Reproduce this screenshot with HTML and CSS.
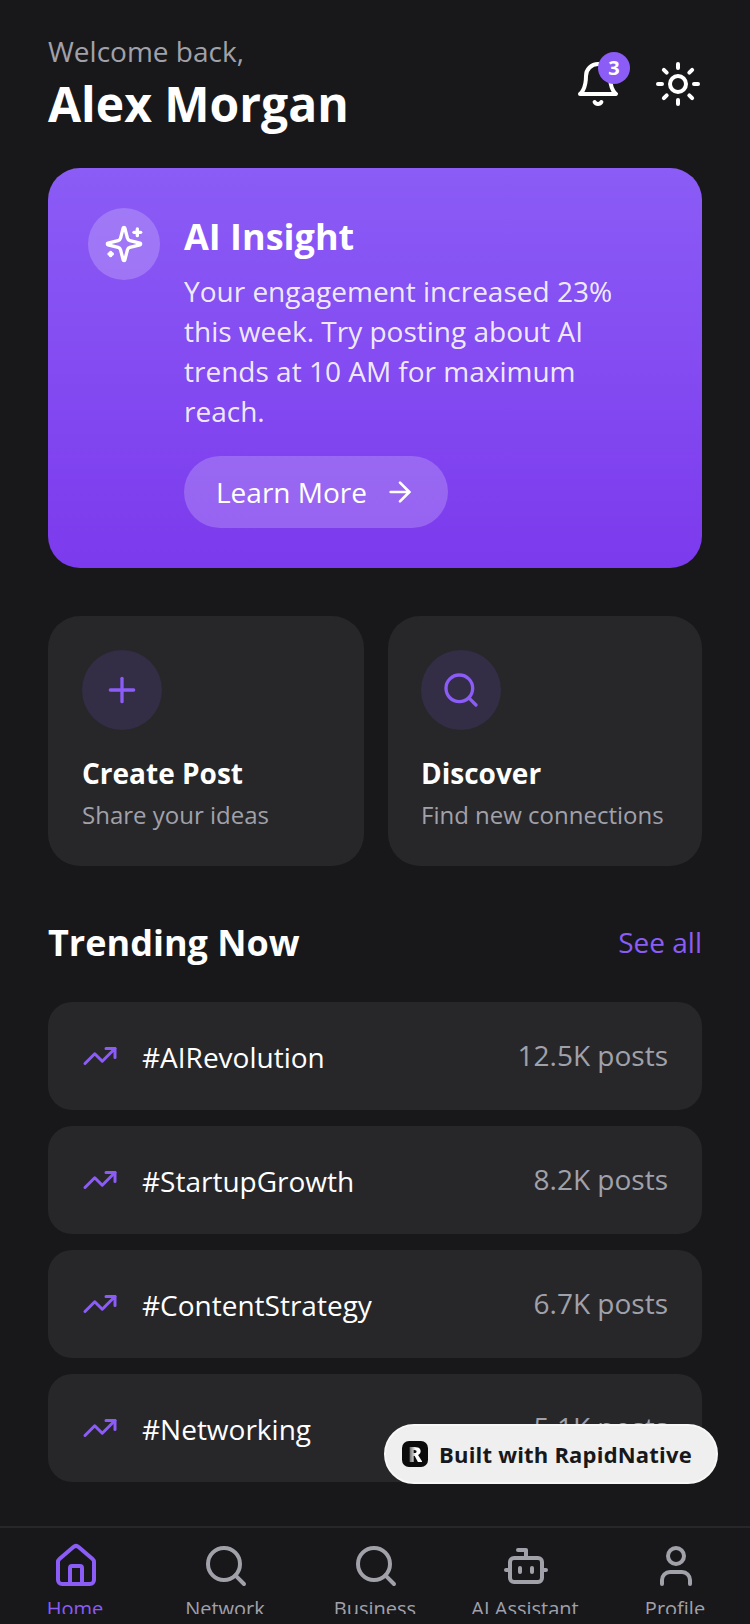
FILE: index.html
```html
<!DOCTYPE html>
<html lang="en">
<head>
    <meta charset="UTF-8">
    <meta name="viewport" content="width=device-width, initial-scale=1.0">
    <title>Home</title>
    <link rel="stylesheet" href="styles.css">
</head>
<body>
    <div class="app">
        <main class="content">
            <header class="top">
                <div>
                    <p class="welcome">Welcome back,</p>
                    <h1 class="name">Alex Morgan</h1>
                </div>
                <div class="top-icons">
                    <div class="bell">
                        <svg class="icon-48" viewBox="0 0 24 24"><path d="M6 8a6 6 0 0 1 12 0c0 7 3 9 3 9H3s3-2 3-9"/><path d="M10.3 21a1.94 1.94 0 0 0 3.4 0"/></svg>
                        <span class="badge">3</span>
                    </div>
                    <svg class="icon-48" viewBox="0 0 24 24"><circle cx="12" cy="12" r="4"/><path d="M12 2v2"/><path d="M12 20v2"/><path d="m4.93 4.93 1.41 1.41"/><path d="m17.66 17.66 1.41 1.41"/><path d="M2 12h2"/><path d="M20 12h2"/><path d="m6.34 17.66-1.41 1.41"/><path d="m19.07 4.93-1.41 1.41"/></svg>
                </div>
            </header>

            <section class="insight">
                <div class="insight-icon">
                    <svg class="icon-40" viewBox="0 0 24 24"><path d="M9.937 15.5A2 2 0 0 0 8.5 14.063l-6.135-1.582a.5.5 0 0 1 0-.962L8.5 9.936A2 2 0 0 0 9.937 8.5l1.582-6.135a.5.5 0 0 1 .963 0L14.063 8.5A2 2 0 0 0 15.5 9.937l6.135 1.581a.5.5 0 0 1 0 .964L15.5 14.063a2 2 0 0 0-1.437 1.437l-1.582 6.135a.5.5 0 0 1-.963 0z"/><path d="M20 3v4"/><path d="M22 5h-4"/><path d="M4 17v2"/><path d="M5 18H3"/></svg>
                </div>
                <div class="insight-body">
                    <h2 class="insight-title">AI Insight</h2>
                    <p class="insight-text">Your engagement increased 23% this week. Try posting about AI trends at 10 AM for maximum reach.</p>
                    <a class="learn">Learn More
                        <svg class="icon-32" viewBox="0 0 24 24"><path d="M5 12h14"/><path d="m12 5 7 7-7 7"/></svg>
                    </a>
                </div>
            </section>

            <section class="quick">
                <div class="quick-card">
                    <div class="quick-icon">
                        <svg class="icon-40" viewBox="0 0 24 24"><path d="M5 12h14"/><path d="M12 5v14"/></svg>
                    </div>
                    <h3 class="quick-title">Create Post</h3>
                    <p class="quick-sub">Share your ideas</p>
                </div>
                <div class="quick-card">
                    <div class="quick-icon">
                        <svg class="icon-40" viewBox="0 0 24 24"><circle cx="11" cy="11" r="8"/><path d="m21 21-4.3-4.3"/></svg>
                    </div>
                    <h3 class="quick-title">Discover</h3>
                    <p class="quick-sub">Find new connections</p>
                </div>
            </section>

            <section class="trending">
                <div class="trending-head">
                    <h2 class="trending-title">Trending Now</h2>
                    <a class="see-all">See all</a>
                </div>
                <div class="trend-row">
                    <svg class="icon-36" viewBox="0 0 24 24"><polyline points="22 7 13.5 15.5 8.5 10.5 2 17"/><polyline points="16 7 22 7 22 13"/></svg>
                    <span class="tag">#AIRevolution</span>
                    <span class="count">12.5K posts</span>
                </div>
                <div class="trend-row">
                    <svg class="icon-36" viewBox="0 0 24 24"><polyline points="22 7 13.5 15.5 8.5 10.5 2 17"/><polyline points="16 7 22 7 22 13"/></svg>
                    <span class="tag">#StartupGrowth</span>
                    <span class="count">8.2K posts</span>
                </div>
                <div class="trend-row">
                    <svg class="icon-36" viewBox="0 0 24 24"><polyline points="22 7 13.5 15.5 8.5 10.5 2 17"/><polyline points="16 7 22 7 22 13"/></svg>
                    <span class="tag">#ContentStrategy</span>
                    <span class="count">6.7K posts</span>
                </div>
                <div class="trend-row">
                    <svg class="icon-36" viewBox="0 0 24 24"><polyline points="22 7 13.5 15.5 8.5 10.5 2 17"/><polyline points="16 7 22 7 22 13"/></svg>
                    <span class="tag">#Networking</span>
                    <span class="count">5.1K posts</span>
                </div>
            </section>
        </main>

        <nav class="tabs">
            <div class="tab active">
                <svg class="icon-48" viewBox="0 0 24 24"><path d="M15 21v-8a1 1 0 0 0-1-1h-4a1 1 0 0 0-1 1v8"/><path d="M3 10a2 2 0 0 1 .709-1.528l7-5.999a2 2 0 0 1 2.582 0l7 5.999A2 2 0 0 1 21 10v9a2 2 0 0 1-2 2H5a2 2 0 0 1-2-2z"/></svg>
                <span class="tab-label">Home</span>
            </div>
            <div class="tab">
                <svg class="icon-48" viewBox="0 0 24 24"><circle cx="11" cy="11" r="8"/><path d="m21 21-4.3-4.3"/></svg>
                <span class="tab-label">Network</span>
            </div>
            <div class="tab">
                <svg class="icon-48" viewBox="0 0 24 24"><circle cx="11" cy="11" r="8"/><path d="m21 21-4.3-4.3"/></svg>
                <span class="tab-label">Business</span>
            </div>
            <div class="tab">
                <svg class="icon-48" viewBox="0 0 24 24"><path d="M12 8V4H8"/><rect width="16" height="12" x="4" y="8" rx="2"/><path d="M2 14h2"/><path d="M20 14h2"/><path d="M15 13v2"/><path d="M9 13v2"/></svg>
                <span class="tab-label">AI Assistant</span>
            </div>
            <div class="tab">
                <svg class="icon-48" viewBox="0 0 24 24"><path d="M19 21v-2a4 4 0 0 0-4-4H9a4 4 0 0 0-4 4v2"/><circle cx="12" cy="7" r="4"/></svg>
                <span class="tab-label">Profile</span>
            </div>
        </nav>

        <div class="built">
            <span class="built-logo"><span class="built-r">R</span></span>
            <span class="built-text">Built with RapidNative</span>
        </div>
    </div>
</body>
</html>
```

FILE: styles.css
```css
* {
    box-sizing: border-box;
}
body {
    margin: 0;
    background-color: #18181b;
    color: #fff;
    font-family: "Open Sans", sans-serif;
}
h1, h2, h3, p {
    margin: 0;
}
svg {
    display: block;
    flex-shrink: 0;
    fill: none;
    stroke: currentColor;
    stroke-width: 2;
    stroke-linecap: round;
    stroke-linejoin: round;
}
.icon-32 { width: 32px; height: 32px; }
.icon-36 { width: 36px; height: 36px; }
.icon-40 { width: 40px; height: 40px; }
.icon-48 { width: 48px; height: 48px; }

.app {
    position: relative;
    display: flex;
    flex-direction: column;
    width: 750px;
    height: 1624px;
    overflow: hidden;
}
.content {
    flex: 1;
    min-height: 0;
    padding: 32px 48px 0;
    overflow: hidden;
}

.top {
    display: flex;
    justify-content: space-between;
    align-items: center;
    height: 104px;
    margin-bottom: 32px;
}
.welcome {
    font-size: 28px;
    line-height: 38px;
    color: #a1a1aa;
}
.name {
    margin-top: 1px;
    font-size: 48px;
    line-height: 66px;
    font-weight: 700;
}
.top-icons {
    display: flex;
    align-items: center;
    gap: 32px;
}
.bell {
    position: relative;
}
.badge {
    position: absolute;
    top: -8px;
    right: -8px;
    width: 32px;
    height: 32px;
    border-radius: 50%;
    background-color: #8b5cf6;
    font-size: 20px;
    font-weight: 700;
    line-height: 32px;
    text-align: center;
}

.insight {
    display: flex;
    gap: 24px;
    height: 400px;
    padding: 40px;
    border-radius: 32px;
    background: linear-gradient(180deg, #8b5cf6, #7c3aed);
}
.insight-icon {
    display: flex;
    align-items: center;
    justify-content: center;
    width: 72px;
    height: 72px;
    border-radius: 50%;
    background-color: rgba(255,255,255,0.2);
}
.insight-body {
    flex: 1;
    padding-top: 2px;
}
.insight-title {
    font-size: 36px;
    line-height: 54px;
    font-weight: 700;
}
.insight-text {
    margin-top: 7px;
    font-size: 28px;
    line-height: 40px;
    color: rgba(255,255,255,0.9);
}
.learn {
    display: inline-flex;
    align-items: center;
    gap: 17px;
    height: 72px;
    margin-top: 25px;
    padding: 0 32px;
    border-radius: 36px;
    background-color: rgba(255,255,255,0.2);
    font-size: 28px;
}

.quick {
    display: flex;
    gap: 24px;
    margin-top: 48px;
}
.quick-card {
    flex: 0 0 314px;
    height: 250px;
    padding: 34px 32px 34px 33px;
    border-radius: 32px;
    background-color: #27272a;
}
.quick-card:first-child {
    flex-basis: 316px;
    padding-left: 34px;
}
.quick-icon {
    display: flex;
    align-items: center;
    justify-content: center;
    width: 80px;
    height: 80px;
    border-radius: 50%;
    background-color: #332d45;
    color: #8b5cf6;
}
.quick-title {
    margin-top: 23px;
    font-size: 28px;
    line-height: 40px;
    font-weight: 700;
}
.quick-sub {
    margin-top: 5px;
    font-size: 24px;
    line-height: 34px;
    color: #a1a1aa;
}

.trending {
    margin-top: 47px;
}
.trending-head {
    display: flex;
    justify-content: space-between;
    align-items: center;
    height: 58px;
    margin-bottom: 31px;
}
.trending-title {
    font-size: 36px;
    font-weight: 700;
}
.see-all {
    font-size: 28px;
    color: #8b5cf6;
}
.trend-row {
    display: flex;
    align-items: center;
    gap: 24px;
    height: 108px;
    margin-bottom: 16px;
    padding: 0 34px;
    border-radius: 24px;
    background-color: #27272a;
}
.trend-row svg {
    color: #8b5cf6;
}
.tag {
    flex: 1;
    margin-top: 2px;
    font-size: 28px;
}
.count {
    margin-top: -2px;
    font-size: 28px;
    color: #a1a1aa;
}

.tabs {
    display: flex;
    flex-shrink: 0;
    height: 98px;
    padding-top: 14px;
    border-top: 2px solid #27272a;
    background-color: #18181b;
}
.tab {
    display: flex;
    flex-direction: column;
    align-items: center;
    width: 150px;
    color: #a1a1aa;
}
.tab svg {
    margin-left: 2px;
}
.tab.active {
    color: #8b5cf6;
}
.tab-label {
    height: 19px;
    margin-top: 5px;
    overflow: hidden;
    font-size: 20px;
    line-height: 27px;
}

.built {
    position: absolute;
    top: 1424px;
    left: 384px;
    display: flex;
    align-items: center;
    gap: 11px;
    width: 334px;
    height: 60px;
    padding-left: 16px;
    border: 2px solid #f7f7f7;
    border-radius: 30px;
    background-color: #efefef;
    color: #18181b;
}
.built-logo {
    width: 26px;
    height: 26px;
    border-radius: 7px;
    background-color: #0b0b0c;
    font-size: 21px;
    font-weight: 800;
    line-height: 26px;
    text-align: center;
}
.built-r {
    color: transparent;
    background: linear-gradient(90deg, #444, #fff 55%);
    -webkit-background-clip: text;
    background-clip: text;
}
.built-text {
    font-size: 22px;
    font-weight: 700;
    letter-spacing: 0.2px;
}
```
